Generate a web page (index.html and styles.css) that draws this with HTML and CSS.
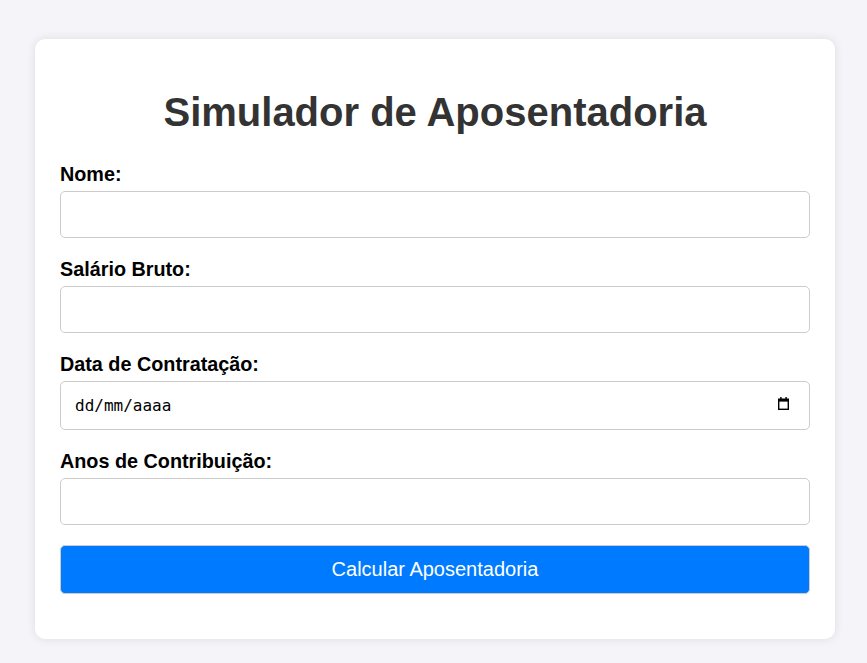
FILE: index.html
```html
<!DOCTYPE html>
<html lang="pt-BR">
<head>
<meta charset="UTF-8">
<title>Simulador de Aposentadoria</title>
<link rel="stylesheet" href="styles.css">
</head>
<body>
<div class="container">
  <h1 class="title">Simulador de Aposentadoria</h1>
  <form class="form">
    <label class="label" for="nome">Nome:</label>
    <input class="field" type="text" id="nome">
    <label class="label" for="salario">Salário Bruto:</label>
    <input class="field" type="number" id="salario">
    <label class="label" for="data">Data de Contratação:</label>
    <div class="date-wrap">
      <input class="field date" type="text" id="data" placeholder="dd/mm/aaaa">
      <svg class="cal-icon" width="11" height="13" viewBox="0 0 11 13" aria-hidden="true">
        <rect x="2.2" y="0" width="1.4" height="2.6" fill="#000"/>
        <rect x="7.4" y="0" width="1.4" height="2.6" fill="#000"/>
        <rect x="0.7" y="2.2" width="9.6" height="10.1" fill="none" stroke="#000" stroke-width="1.4"/>
        <rect x="0.7" y="2.2" width="9.6" height="2.4" fill="#000"/>
      </svg>
    </div>
    <label class="label" for="anos">Anos de Contribuição:</label>
    <input class="field" type="number" id="anos">
    <button class="btn" type="button">Calcular Aposentadoria</button>
  </form>
</div>
</body>
</html>
```
FILE: styles.css
```css
html, body {
  margin: 0;
  padding: 0;
}
body {
  background: #f4f4f9;
  font-family: "Liberation Sans", Arial, sans-serif;
  padding: 39px 0 39px 3px;
}
.container {
  width: 800px;
  box-sizing: border-box;
  margin: 0 auto;
  background: #fff;
  border-radius: 10px;
  box-shadow: 0 0 10px rgba(0, 0, 0, 0.1);
  padding: 25px 25px 45px;
}
.title {
  color: #333;
  text-align: center;
  font-size: 40px;
  margin: 26px 0 28px;
}
.form {
  display: flex;
  flex-direction: column;
}
.label {
  font-weight: bold;
  font-size: 19.8px;
  color: #000;
  margin-bottom: 5px;
}
.field {
  height: 47px;
  box-sizing: border-box;
  border: 1px solid #ccc;
  border-radius: 5px;
  padding: 10px;
  font-size: 16px;
  margin-bottom: 20px;
}
.date-wrap {
  position: relative;
  display: flex;
  flex-direction: column;
}
.date {
  height: 49px;
  padding-left: 14px;
  font-family: "DejaVu Sans Mono", monospace;
  width: 100%;
}
.date::placeholder {
  color: #000;
  opacity: 1;
}
.cal-icon {
  position: absolute;
  right: 21px;
  top: 16px;
}
.btn {
  height: 49px;
  background: #007bff;
  color: #fff;
  border: 1px solid #ccc;
  border-radius: 5px;
  font-family: "Liberation Sans", Arial, sans-serif;
  font-size: 20px;
  cursor: pointer;
}
```
